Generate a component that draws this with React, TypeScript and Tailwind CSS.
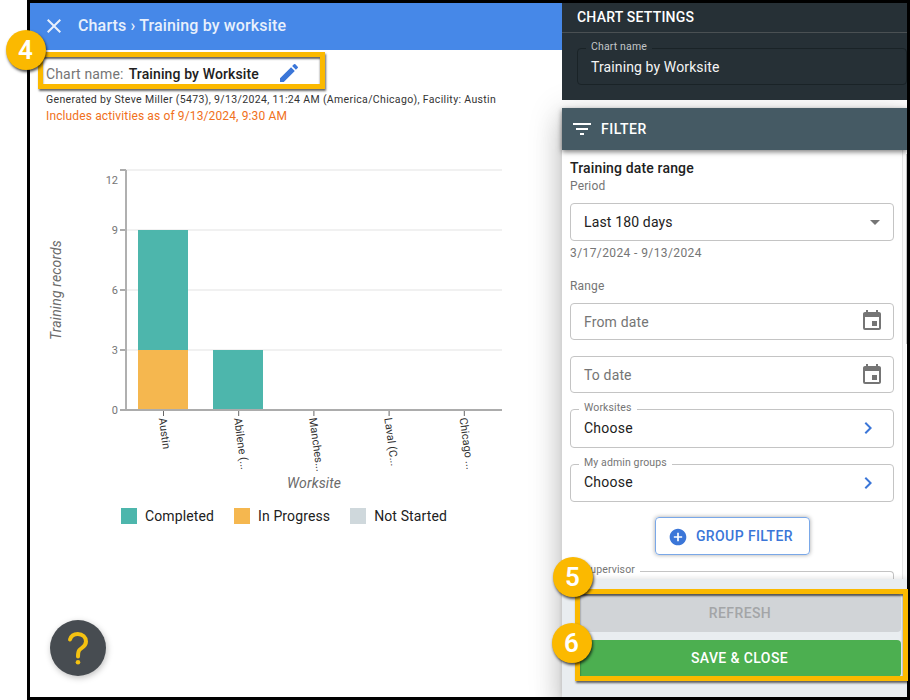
import React from "react";
import {
  MdAddCircle,
  MdArrowDropDown,
  MdChevronRight,
  MdClose,
  MdEdit,
  MdEvent,
  MdFilterList,
} from "react-icons/md";

const worksites = [
  { name: "Austin", completed: 6, inProgress: 3 },
  { name: "Abilene (...", completed: 3, inProgress: 0 },
  { name: "Manches...", completed: 0, inProgress: 0 },
  { name: "Laval (C...", completed: 0, inProgress: 0 },
  { name: "Chicago ...", completed: 0, inProgress: 0 },
];

const ticks = [0, 3, 6, 9, 12];

const Chart = () => {
  return (
    <svg width="490" height="350" viewBox="30 150 490 350" className="block">
      {ticks.map((t) => (
        <g key={t}>
          <line x1="126" x2="502" y1={410 - t * 20} y2={410 - t * 20} stroke="#f1f1f1" strokeWidth="2" />
          <line x1="120" x2="126" y1={410 - t * 20} y2={410 - t * 20} stroke="#acacac" strokeWidth="2" />
          <text
            x="118"
            y={t === 12 ? 184 : 414 - t * 20}
            textAnchor="end"
            className="fill-[#757575] text-[11px]"
          >
            {t}
          </text>
        </g>
      ))}
      <line x1="126" x2="126" y1="170" y2="410" stroke="#b0b0b0" strokeWidth="2" />
      {worksites.map((w, i) => {
        const x = 163.5 + i * 75.2;
        return (
          <g key={w.name}>
            <rect x={Math.round(x - 25.5)} y={410 - (w.completed + w.inProgress) * 20} width="50" height={w.completed * 20} fill="#4db6ac" />
            <rect x={Math.round(x - 25.5)} y={410 - w.inProgress * 20} width="50" height={w.inProgress * 20} fill="#f5b74f" />
            <line x1={x} x2={x} y1="410" y2="416" stroke="#666" />
            <text
              transform={`translate(${x - 4.8} 418.3) rotate(82)`}
              className="fill-[#333] text-[11px]"
              letterSpacing="0.05"
            >
              {w.name}
            </text>
          </g>
        );
      })}
      <line x1="120" x2="502" y1="410" y2="410" stroke="#acacac" strokeWidth="2" />
      <text transform="translate(61 340) rotate(-90)" className="fill-[#6b6b6b] text-[14px] italic" letterSpacing="0.15">
        Training records
      </text>
      <text x="287" y="488" className="fill-[#6b6b6b] text-[14px] italic" letterSpacing="0.15">
        Worksite
      </text>
    </svg>
  );
};

const LegendItem = ({ color, label }: { color: string; label: string }) => (
  <div className="flex items-center gap-2">
    <span className={`h-4 w-4 ${color}`} />
    <span className="text-[14px] leading-4 tracking-[0.12px] text-[#212121]">{label}</span>
  </div>
);

const DateField = ({ label, iconOffset }: { label: string; iconOffset: string }) => (
  <div className="flex h-[37px] items-center justify-between rounded border border-[#c4c4c4] pr-[9px] pl-[13px]">
    <span className="pt-[2px] text-[14px] tracking-[0.15px] text-[#757575]">{label}</span>
    <MdEvent className={`h-6 w-6 text-[#757575] ${iconOffset}`} />
  </div>
);

const ChooseField = ({ label, height, row }: { label: string; height: string; row: string }) => (
  <fieldset className={`min-w-0 rounded border border-[#c4c4c4] pr-3 pl-[13px] ${height}`}>
    <legend className="ml-[-5px] h-[10px] px-[5px] text-[10.5px] leading-[8px] tracking-[0.12px] text-[#757575]">
      {label}
    </legend>
    <div className={`flex items-center justify-between ${row}`}>
      <span className="text-[14px] tracking-[0.25px] text-[#212121]">Choose</span>
      <MdChevronRight className="mr-[1px] h-6 w-6 text-[#3b76d8]" />
    </div>
  </fieldset>
);

const StepBadge = ({ step, place }: { step: number; place: string }) => (
  <div
    className={`absolute flex h-10 w-10 items-center justify-center rounded-full bg-[#fbb900] pr-px text-[26px] font-semibold text-white shadow-[1px_2px_3px_rgba(0,0,0,0.7)] ${place}`}
  >
    {step}
  </div>
);

export default function App() {
  return (
    <div className="relative h-[700px] w-[910px] overflow-hidden bg-white pl-[27px] font-['Roboto',sans-serif]">
      <div className="flex h-[700px] border-[3px] border-black">
        {/* Chart side */}
        <main className="flex w-[532px] flex-col">
          <header className="relative z-10 flex h-[47px] shrink-0 items-center bg-[#4688e8] pb-[2px] pl-3 text-[#e8f0fc]">
            <MdClose className="h-6 w-6" />
            <span className="ml-3 text-[16px] font-medium tracking-[0.14px]">Charts › Training by worksite</span>
          </header>

          <div className="flex h-[48px] items-center pl-4 text-[14px]">
            <span className="tracking-[0.15px] text-[#757575]">Chart name:</span>
            <span className="ml-[5px] font-medium tracking-[0.12px] text-[#212121]">Training by Worksite</span>
            <MdEdit className="mt-[-2px] ml-[18px] h-6 w-6 text-[#3b76d8]" />
          </div>
          <p className="pl-4 text-[10.5px] leading-[3px] tracking-[0.34px] text-[#333]">
            Generated by Steve Miller (5473), 9/13/2024, 11:24 AM (America/Chicago), Facility: Austin
          </p>
          <p className="mt-[7px] h-4 pl-4 text-[12px] leading-4 tracking-[0.13px] text-[#f07020]">
            Includes activities as of 9/13/2024, 9:30 AM
          </p>

          <div className="mt-[26px]">
            <Chart />
          </div>
          <div className="mt-2 flex gap-5 pl-[91px]">
            <LegendItem color="bg-[#4db6ac]" label="Completed" />
            <LegendItem color="bg-[#f5b74f]" label="In Progress" />
            <LegendItem color="bg-[#cfd8dc]" label="Not Started" />
          </div>

          {/* Help button */}
          <div className="mt-24 ml-5 flex h-14 w-14 items-center justify-center rounded-full bg-[#474c51] shadow-[1px_2px_6px_rgba(0,0,0,0.25)]">
            <svg width="24" height="36" viewBox="0 0 24 36" fill="none">
              <path
                d="M4 9.5C5.2 5.6 8 4 11.8 4 16.6 4 20 7.2 20 11.4 20 16.4 15.8 17.4 13.4 20 12.2 21.3 12 22.6 12 26.4"
                stroke="#f5c211"
                strokeWidth="4"
                strokeLinecap="round"
              />
              <circle cx="12" cy="32.3" r="2.3" fill="#f5c211" />
            </svg>
          </div>
        </main>

        {/* Settings side */}
        <aside className="flex w-[345px] flex-col">
          <section className="relative z-10 h-[97px] bg-[#263036]">
            <h2 className="h-[30px] border-b border-[#4a5053] pl-[15px] text-[14px] leading-[29px] font-medium tracking-[0.22px] text-white">
              CHART SETTINGS
            </h2>
            <fieldset className="mt-[10px] ml-[15px] h-[42px] rounded border border-[#1a2327] pl-[13px]">
              <legend className="ml-[-5px] h-[10px] px-[5px] text-[10.5px] leading-[8px] tracking-[0.15px] text-[#c2c6c8]">
                Chart name
              </legend>
              <div className="text-[14px] leading-[28px] tracking-[0.12px] text-[#f5f5f5]">Training by Worksite</div>
            </fieldset>
          </section>

          <section className="mt-2 flex h-[589px] flex-col shadow-[0_8px_10px_-5px_rgba(0,0,0,0.2),0_16px_24px_2px_rgba(0,0,0,0.14),0_6px_30px_5px_rgba(0,0,0,0.12)]">
            <div className="z-10 flex h-[42px] shrink-0 items-center bg-[#455a64] pl-2 text-white shadow-[0_2px_5px_rgba(0,0,0,0.5)]">
              <MdFilterList className="h-6 w-6" />
              <span className="ml-[7px] text-[14px] font-medium tracking-[0.5px]">FILTER</span>
            </div>

            <div className="flex h-[429px] overflow-hidden bg-white">
              <div className="w-[340px] pt-2 pr-2 pl-2">
                <h3 className="text-[14px] leading-5 font-medium tracking-[0.15px] text-[#212121]">Training date range</h3>
                <p className="text-[12px] leading-4 tracking-[0.15px] text-[#757575]">Period</p>
                <div className="mt-[9px] flex h-[38px] items-center justify-between rounded border border-[#c4c4c4] pr-[6px] pl-[13px]">
                  <span className="text-[14px] tracking-[0.15px] text-[#212121]">Last 180 days</span>
                  <MdArrowDropDown className="h-6 w-6 text-[#757575]" />
                </div>
                <p className="mt-1 text-[12px] leading-4 tracking-[0.4px] text-[#757575]">3/17/2024 - 9/13/2024</p>
                <p className="mt-[17px] mb-[9px] text-[12px] leading-4 tracking-[0.15px] text-[#757575]">Range</p>
                <DateField label="From date" iconOffset="mt-[-2px]" />
                <div className="mt-4 mb-[11px]">
                  <DateField label="To date" iconOffset="mt-0" />
                </div>
                <ChooseField label="Worksites" height="h-[44px]" row="h-[28px]" />
                <div className="mt-[11px]">
                  <ChooseField label="My admin groups" height="h-[43px]" row="h-[27px]" />
                </div>
                <div className="mt-[15px] flex justify-center">
                  <button className="flex h-[38px] w-[155px] items-center justify-center rounded border border-[#7aa8e8] pr-[3px] text-[14px] font-medium tracking-[0.4px] text-[#3b76d8] shadow-[0_0_4px_rgba(0,0,0,0.35)]">
                    <MdAddCircle className="mt-px mr-2 h-5 w-5" />
                    GROUP FILTER
                  </button>
                </div>
                {/* Next field, mostly scrolled below the footer */}
                <fieldset className="mt-[11px] h-5 rounded-t border border-b-0 border-[#c4c4c4] pl-[13px]">
                  <legend className="ml-[-5px] h-[10px] px-[5px] text-[10.5px] leading-[8px] tracking-[0.12px] text-[#757575]">
                    Supervisor
                  </legend>
                </fieldset>
              </div>
              <div className="w-[5px] border-l border-[#e4e4e4] bg-[#fafafa]">
                <div className="mt-1 ml-auto h-[190px] w-[1px] bg-[#c1c1c1]" />
              </div>
            </div>

            <footer className="z-10 flex h-[118px] shrink-0 flex-col gap-2 bg-[#e9edf0] pt-[15px] pr-[6px] pl-[15px] shadow-[0_-2px_4px_rgba(0,0,0,0.08)]">
              <button className="h-[38px] rounded bg-[#d1d4d7] pl-[2px] text-[14px] font-medium tracking-[0.4px] text-[#a3a5a7]">
                REFRESH
              </button>
              <button className="h-[37px] rounded bg-[#4caf50] pl-px text-[14px] font-medium tracking-[0.4px] text-white">
                SAVE &amp; CLOSE
              </button>
            </footer>
          </section>
        </aside>
      </div>

      {/* Step callouts */}
      <div className="absolute top-0 left-0 z-20 h-full w-full">
        <div className="absolute top-[52px] left-[38px] h-[37px] w-[287px] border-[5px] border-[#fbb900] shadow-[1px_2px_2px_rgba(0,0,0,0.6),inset_0_2px_2px_rgba(0,0,0,0.6)]" />
        <div className="absolute top-[589px] left-[575px] h-[92px] w-[333px] border-[5px] border-[#fbb900] shadow-[1px_2px_2px_rgba(0,0,0,0.6),inset_0_2px_2px_rgba(0,0,0,0.6)]" />
        <StepBadge step={4} place="top-[30px] left-[6px]" />
        <StepBadge step={5} place="top-[557px] left-[553px]" />
        <StepBadge step={6} place="top-[623px] left-[552px]" />
      </div>
    </div>
  );
}
